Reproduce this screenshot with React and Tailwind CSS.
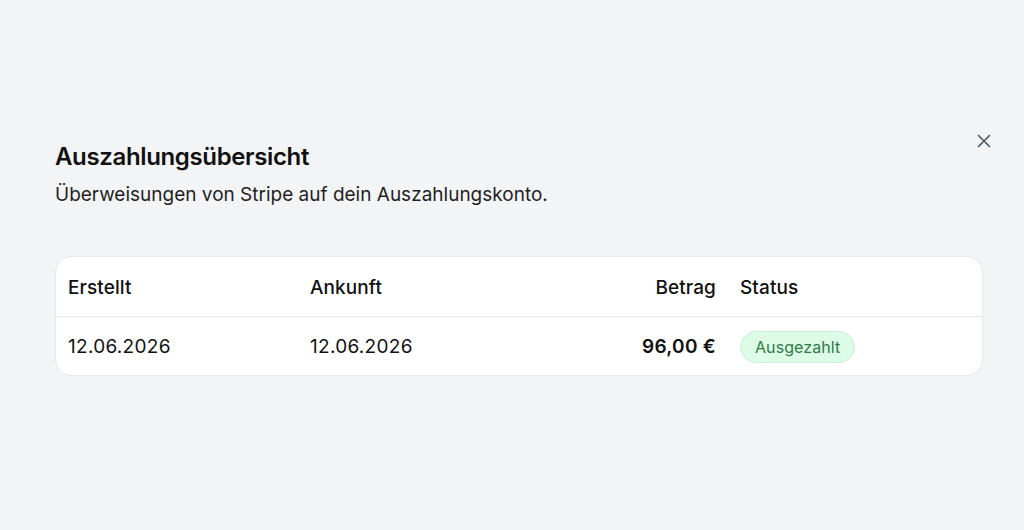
import React from "react";

export default function App() {
  return (
    <div className="min-h-[530px] w-full bg-[#f3f4f6] text-[#111111]" style={{ fontFamily: "Inter, 'Noto Sans', sans-serif" }}>
      <div className="relative ml-[55px] w-[928px] pt-[141px]">
        <button className="absolute right-[-11px] top-[131px] flex h-5 w-5 items-center justify-center text-[#4b5563]">
          <svg width="16" height="16" viewBox="0 0 16 16" fill="none" stroke="currentColor" strokeWidth="1.6" strokeLinecap="round">
            <path d="M2.5 2.5l11 11M13.5 2.5l-11 11" />
          </svg>
        </button>
        <h2 className="text-[24px] font-semibold leading-[32px] tracking-[-0.015em]">Auszahlungsübersicht</h2>
        <p className="mt-[9px] text-[19px] leading-[26px] tracking-[0em] text-[#1f1f1f]">Überweisungen von Stripe auf dein Auszahlungskonto.</p>
        <div className="mt-[48px] overflow-hidden rounded-[16px] border border-[#e5e7eb] bg-white">
          <div className="grid h-[60px] grid-cols-[242px_242px_188px_1fr] items-center border-b border-[#e5e7eb] pt-[4px] text-[19px] font-medium tracking-[0.005em]">
            <div className="px-3">Erstellt</div>
            <div className="px-3">Ankunft</div>
            <div className="px-3 text-right">Betrag</div>
            <div className="px-3">Status</div>
          </div>
          <div className="grid h-[58px] grid-cols-[242px_242px_188px_1fr] items-center pt-[2px] text-[19px] tracking-[0.015em]">
            <div className="px-3">12.06.2026</div>
            <div className="px-3">12.06.2026</div>
            <div className="px-3 text-right font-semibold">96,00 €</div>
            <div className="px-3">
              <span className="inline-flex h-[32px] items-center rounded-full border border-[#c8f0d4] bg-[#dcfce7] px-[14px] text-[16px] tracking-[0.005em] text-[#2f7a45]">Ausgezahlt</span>
            </div>
          </div>
        </div>
      </div>
    </div>
  );
}
